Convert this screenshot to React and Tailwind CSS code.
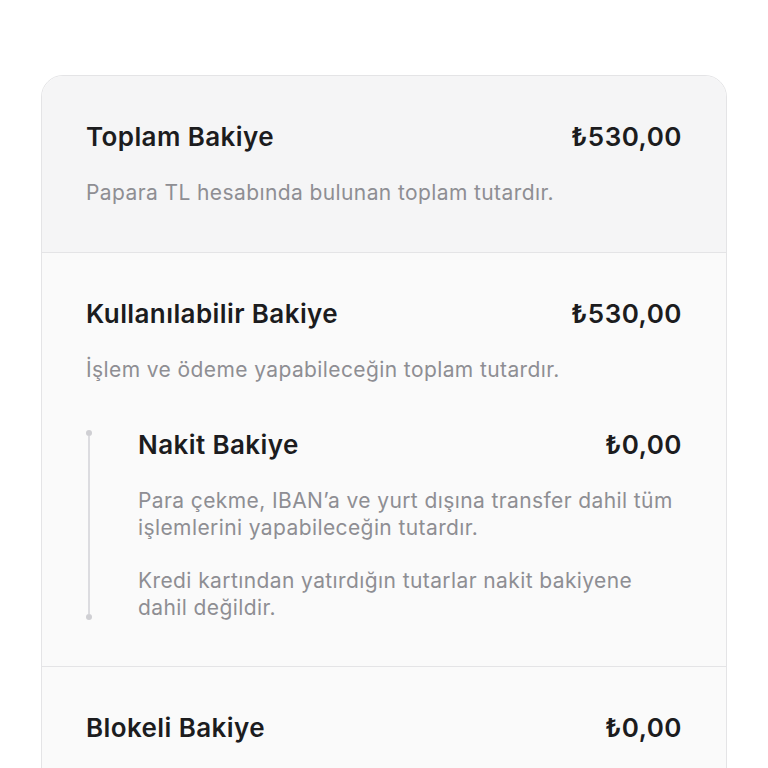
export default function App() {
  return (
    <div className="min-h-[768px] bg-white pt-[75px] px-[41px] font-['Inter',sans-serif] overflow-hidden h-[768px]">
      <div className="rounded-t-[22px] border border-[#e4e4e6] overflow-hidden">
        <section className="bg-[#f5f5f6] px-[44px] py-[45px]">
          <div className="flex items-center justify-between">
            <h2 className="text-[26px] leading-[32px] font-semibold text-[#1c1c1e] tracking-[0.4px]">Toplam Bakiye</h2>
            <span className="text-[26px] leading-[32px] font-semibold text-[#1c1c1e] tracking-[0.5px]">₺530,00</span>
          </div>
          <p className="mt-[26px] text-[21px] leading-[28px] text-[#8e8e93] tracking-[0.4px]">Papara TL hesabında bulunan toplam tutardır.</p>
        </section>

        <section className="bg-[#fafafa] border-t border-[#e4e4e6] px-[44px] py-[45px]">
          <div className="flex items-center justify-between">
            <h2 className="text-[26px] leading-[32px] font-semibold text-[#1c1c1e] tracking-[0.4px]">Kullanılabilir Bakiye</h2>
            <span className="text-[26px] leading-[32px] font-semibold text-[#1c1c1e] tracking-[0.5px]">₺530,00</span>
          </div>
          <p className="mt-[26px] text-[21px] leading-[28px] text-[#8e8e93] tracking-[0.4px]">İşlem ve ödeme yapabileceğin toplam tutardır.</p>

          <div className="mt-[45px] flex gap-[46px]">
            <div className="flex w-[6px] flex-col items-center py-[1px]">
              <div className="h-[6px] w-[6px] rounded-full bg-[#cfcfd3]" />
              <div className="w-[2px] flex-1 bg-[#dcdce0]" />
              <div className="h-[6px] w-[6px] rounded-full bg-[#cfcfd3]" />
            </div>
            <div className="flex-1">
              <div className="flex items-center justify-between">
                <h3 className="text-[26px] leading-[32px] font-semibold text-[#1c1c1e] tracking-[0.4px]">Nakit Bakiye</h3>
                <span className="text-[26px] leading-[32px] font-semibold text-[#1c1c1e] tracking-[0.5px]">₺0,00</span>
              </div>
              <p className="mt-[26px] text-[21px] leading-[27px] text-[#8e8e93] tracking-[0.4px]">
                Para çekme, IBAN’a ve yurt dışına transfer dahil tüm işlemlerini yapabileceğin tutardır.
              </p>
              <p className="mt-[26px] text-[21px] leading-[27px] text-[#8e8e93] tracking-[0.4px]">
                Kredi kartından yatırdığın tutarlar nakit bakiyene dahil değildir.
              </p>
            </div>
          </div>
        </section>

        <section className="bg-[#fafafa] border-t border-[#e4e4e6] px-[44px] py-[45px]">
          <div className="flex items-center justify-between">
            <h2 className="text-[26px] leading-[32px] font-semibold text-[#1c1c1e] tracking-[0.4px]">Blokeli Bakiye</h2>
            <span className="text-[26px] leading-[32px] font-semibold text-[#1c1c1e] tracking-[0.5px]">₺0,00</span>
          </div>
        </section>
      </div>
    </div>
  )
}
